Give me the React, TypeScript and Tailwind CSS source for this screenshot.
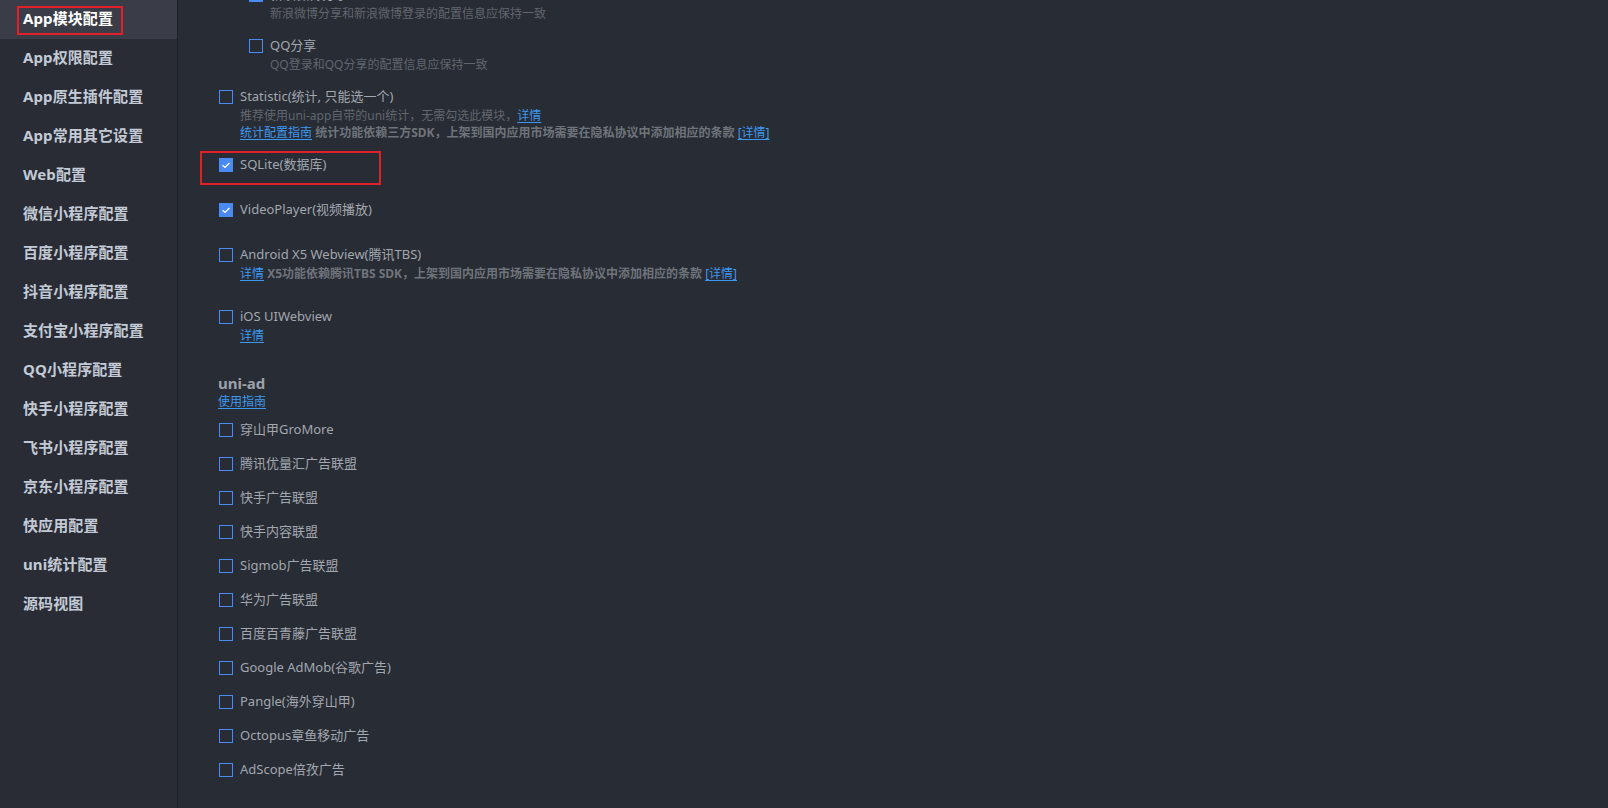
import React from "react";

const navItems = [
  "App模块配置",
  "App权限配置",
  "App原生插件配置",
  "App常用其它设置",
  "Web配置",
  "微信小程序配置",
  "百度小程序配置",
  "抖音小程序配置",
  "支付宝小程序配置",
  "QQ小程序配置",
  "快手小程序配置",
  "飞书小程序配置",
  "京东小程序配置",
  "快应用配置",
  "uni统计配置",
  "源码视图",
];

const adItems = [
  "穿山甲GroMore",
  "腾讯优量汇广告联盟",
  "快手广告联盟",
  "快手内容联盟",
  "Sigmob广告联盟",
  "华为广告联盟",
  "百度百青藤广告联盟",
  "Google AdMob(谷歌广告)",
  "Pangle(海外穿山甲)",
  "Octopus章鱼移动广告",
  "AdScope倍孜广告",
];

function Checkbox({ checked }: { checked?: boolean }) {
  if (checked) {
    return (
      <span className="flex h-[14px] w-[14px] shrink-0 items-center justify-center bg-[#4a8af4]">
        <svg width="14" height="14" viewBox="0 0 14 14" fill="none">
          <path d="M3.6 7.2 L6 9.4 L10.4 4.9" stroke="#ffffff" strokeWidth="1.4" />
        </svg>
      </span>
    );
  }
  return <span className="h-[14px] w-[14px] shrink-0 border border-[#4a8af4]" />;
}

function Row({ label, checked }: { label: string; checked?: boolean }) {
  return (
    <div className="flex h-5 items-center gap-[7px]">
      <Checkbox checked={checked} />
      <span className="text-[13px] text-[#a2a7b0]">{label}</span>
    </div>
  );
}

function Link({ children }: { children: React.ReactNode }) {
  return <a className="cursor-pointer text-[#3d99f0] underline underline-offset-2">{children}</a>;
}

export default function App() {
  return (
    <div
      className="flex h-screen w-full overflow-hidden bg-[#282c34]"
      style={{ fontFamily: '"Noto Sans", "Noto Sans CJK SC", sans-serif' }}
    >
      {/* Sidebar */}
      <aside className="flex w-[178px] shrink-0 flex-col border-r border-[#1d2027] bg-[#292c35]">
        {navItems.map((item, i) => (
          <div
            key={item}
            className={`relative flex h-[39px] items-center pb-[2px] pl-[23px] text-[15px] font-bold tracking-[0.1px] ${
              i === 0 ? "bg-[#3a3d47] text-white" : "text-[#c3cad6]"
            }`}
          >
            {item}
            {i === 0 && (
              <span className="absolute left-[17px] top-[6px] h-[29px] w-[106px] border-2 border-[#e3202a]" />
            )}
          </div>
        ))}
      </aside>

      {/* Content */}
      <main className="flex-1 overflow-hidden pl-[41px]">
        <div className="-mt-[15px] flex flex-col">
          {/* nested share items */}
          <div className="ml-[30px] flex flex-col">
            <Row label="新浪微博分享" checked />
            <div className="pl-[21px] text-[12px] leading-[17px] text-[#62666e]">
              新浪微博分享和新浪微博登录的配置信息应保持一致
            </div>
            <div className="mt-[14px]">
              <Row label="QQ分享" />
              <div className="pl-[21px] text-[12px] leading-[17px] text-[#62666e]">
                QQ登录和QQ分享的配置信息应保持一致
              </div>
            </div>
          </div>

          <div className="mt-[14px]">
            <Row label="Statistic(统计, 只能选一个)" />
            <div className="pl-[21px] text-[12px] leading-[17px] text-[#62666e]">
              <div>
                推荐使用uni-app自带的uni统计，无需勾选此模块，<Link>详情</Link>
              </div>
              <div>
                <Link>统计配置指南</Link>
                <span className="font-bold text-[#6f747c]"> 统计功能依赖三方SDK，上架到国内应用市场需要在隐私协议中添加相应的条款 </span>
                <Link>[详情]</Link>
              </div>
            </div>
          </div>

          <div className="relative mt-[14px]">
            <Row label="SQLite(数据库)" checked />
            <span className="absolute left-[-19px] top-[-4px] h-[34px] w-[181px] border-2 border-[#e3202a]" />
          </div>

          <div className="mt-[25px]">
            <Row label="VideoPlayer(视频播放)" checked />
          </div>

          <div className="mt-[25px]">
            <Row label="Android X5 Webview(腾讯TBS)" />
            <div className="pl-[21px] text-[12px] leading-[17px] text-[#62666e]">
              <Link>详情</Link>
              <span className="font-bold text-[#6f747c]"> X5功能依赖腾讯TBS SDK，上架到国内应用市场需要在隐私协议中添加相应的条款 </span>
              <Link>[详情]</Link>
            </div>
          </div>

          <div className="mt-[25px]">
            <Row label="iOS UIWebview" />
            <div className="pl-[21px] text-[12px] leading-[17px]">
              <Link>详情</Link>
            </div>
          </div>

          {/* uni-ad */}
          <div className="-ml-px mt-[29px] text-[15px] font-bold leading-5 text-[#9ca1aa]">uni-ad</div>
          <div className="-ml-px text-[12px] leading-[17px]">
            <Link>使用指南</Link>
          </div>

          <div className="mt-[10px] flex flex-col gap-[14px]">
            {adItems.map((item) => (
              <Row key={item} label={item} />
            ))}
          </div>
        </div>
      </main>
    </div>
  );
}
